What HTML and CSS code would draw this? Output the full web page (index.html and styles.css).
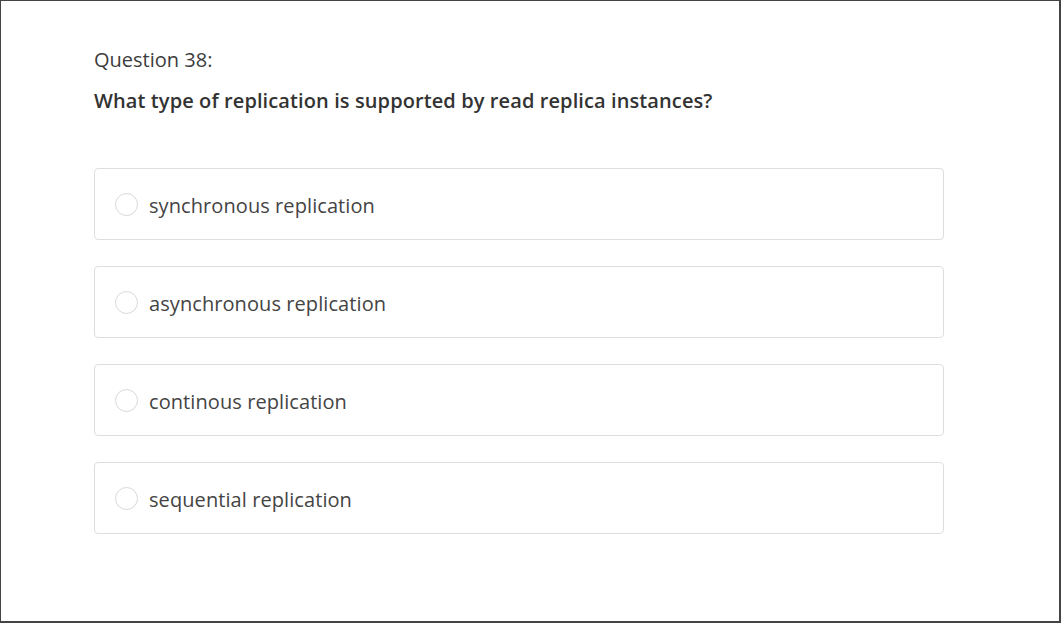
FILE: index.html
```html
<!DOCTYPE html>
<html>
<head>
<meta charset="utf-8">
<link rel="stylesheet" href="styles.css">
</head>
<body>
<div class="frame">
  <div class="quiz">
    <div class="qnum">Question 38:</div>
    <div class="qtext">What type of replication is supported by read replica instances?</div>
    <div class="options">
      <label class="option"><span class="radio"></span><span class="label">synchronous replication</span></label>
      <label class="option"><span class="radio"></span><span class="label">asynchronous replication</span></label>
      <label class="option"><span class="radio"></span><span class="label">continous replication</span></label>
      <label class="option"><span class="radio"></span><span class="label">sequential replication</span></label>
    </div>
  </div>
</div>
</body>
</html>
```
FILE: styles.css
```css
html, body {
  margin: 0;
  padding: 0;
  background: #fff;
}
.frame {
  box-sizing: border-box;
  width: 1061px;
  height: 623px;
  border-style: solid;
  border-color: #444;
  border-width: 1px 2px 2px 1px;
  font-family: "Open Sans", sans-serif;
  color: #333;
}
.quiz {
  padding: 45px 0 0 93px;
  width: 850px;
}
.qnum {
  font-size: 20px;
  line-height: 28px;
  color: #3c3c3c;
}
.qtext {
  font-size: 20px;
  line-height: 28px;
  font-weight: 600;
  letter-spacing: 0.1px;
  margin-top: 13px;
  color: #333;
}
.options {
  margin-top: 53px;
  display: flex;
  flex-direction: column;
  gap: 26px;
}
.option {
  box-sizing: border-box;
  height: 72px;
  border: 1px solid #dedede;
  border-radius: 4px;
  display: flex;
  align-items: center;
  padding-left: 20px;
}
.radio {
  box-sizing: border-box;
  width: 23px;
  height: 23px;
  border: 1px solid #d8d8d8;
  border-radius: 50%;
  margin-right: 11px;
  flex: none;
}
.label {
  font-size: 20px;
  line-height: 28px;
  letter-spacing: 0.08px;
  color: #444;
  margin-top: 4px;
}
```
